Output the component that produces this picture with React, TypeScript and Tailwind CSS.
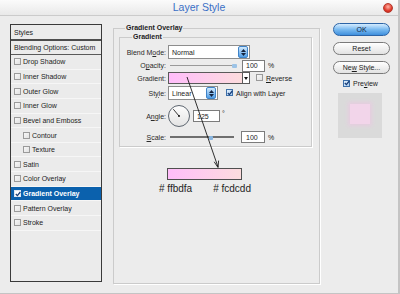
import React from "react";

const Box = ({ checked = false, light = false }: { checked?: boolean; light?: boolean }) => (
  <span
    className={`relative inline-flex h-[7px] w-[7px] shrink-0 items-center justify-center border ${
      light
        ? "border-[#dfe8f2] bg-white"
        : checked
          ? "border-[#3d6fa8] bg-gradient-to-br from-[#e3f1fd] to-[#a9cdf0]"
          : "border-[#9a9a9a] bg-gradient-to-br from-[#f7f7f7] to-[#e2e2e2]"
    }`}
  >
    {checked && (
      <svg width="6" height="6" viewBox="0 0 6 6" className="absolute">
        <path d="M0.8 3 L2.4 4.6 L5.3 1" fill="none" stroke={light ? "#1b3f73" : "#173c78"} strokeWidth="1.3" />
      </svg>
    )}
  </span>
);

const Spinner = () => (
  <span className="ml-auto flex h-[12px] w-[10px] flex-col items-center justify-center gap-[1px] rounded-[2px] border border-[#3f83c8] bg-gradient-to-b from-[#cfe9fd] to-[#4f9ee6]">
    <svg width="5" height="3" viewBox="0 0 5 3">
      <path d="M0 3 L2.5 0 L5 3 Z" fill="#13233f" />
    </svg>
    <svg width="5" height="3" viewBox="0 0 5 3">
      <path d="M0 0 L2.5 3 L5 0 Z" fill="#13233f" />
    </svg>
  </span>
);

const styles: { label: string; indent?: boolean; active?: boolean }[] = [
  { label: "Drop Shadow" },
  { label: "Inner Shadow" },
  { label: "Outer Glow" },
  { label: "Inner Glow" },
  { label: "Bevel and Emboss" },
  { label: "Contour", indent: true },
  { label: "Texture", indent: true },
  { label: "Satin" },
  { label: "Color Overlay" },
  { label: "Gradient Overlay", active: true },
  { label: "Pattern Overlay" },
  { label: "Stroke" },
];

const Label = ({ children }: { children: React.ReactNode }) => (
  <span className="w-[46px] shrink-0 text-right text-[#2a2a2a]">{children}</span>
);

export default function App() {
  return (
    <div className="relative h-[294px] w-[400px] overflow-hidden border-b border-r-2 border-[#c4c4c4] bg-[#ececec] font-['Liberation_Sans',Arial,sans-serif] text-[7px] leading-none text-[#1c1c1c]">
      {/* title bar */}
      <div className="relative flex h-[16px] items-center justify-center border-b border-[#cbcbcb] bg-gradient-to-b from-[#fbfbfb] to-[#e9e9e9]">
        <span className="text-[10.5px] text-[#3a6fc6]">Layer Style</span>
        <span className="absolute right-[5px] top-[3px] h-[10px] w-[10px] rounded-full border border-[#b33a2e] bg-[radial-gradient(circle_at_50%_35%,#ffb3a6,#e0392a_60%,#b8221a)]" />
      </div>

      <div className="flex pl-[10px] pt-[8px]">
        {/* styles list */}
        <div className="flex h-[258px] w-[92px] shrink-0 flex-col border border-[#3a3a3a] bg-[#ebebeb]">
          <div className="flex h-[16px] items-center border-b-2 border-[#4d4d4d] pl-[3px]">Styles</div>
          <div className="flex h-[14px] items-center border-b border-[#5a5a5a] pl-[3px]">Blending Options: Custom</div>
          {styles.map((s) => (
            <div
              key={s.label}
              className={`flex h-[14.65px] items-center gap-[2px] border-b border-[#f6f6f6] ${
                s.indent ? "pl-[12px]" : "pl-[3px]"
              } ${s.active ? "bg-[#0b61ad] font-bold text-white" : ""}`}
            >
              <Box checked={s.active} light={s.active} />
              <span>{s.label}</span>
            </div>
          ))}
        </div>

        {/* main settings */}
        <fieldset className="ml-[11px] h-[260px] w-[207px] shrink-0 border border-[#cbcbcb] shadow-[1px_1px_0_#fff]">
          <legend className="ml-[11px] px-[1px] text-[7px] font-bold leading-[8px]">Gradient Overlay</legend>

          <fieldset className="ml-[5px] mt-[1px] h-[114px] w-[193px] border border-[#cbcbcb] shadow-[1px_1px_0_#fff]">
            <legend className="ml-[12px] px-[1px] font-bold leading-[8px]">Gradient</legend>

            <div className="mt-[4px] flex h-[14px] items-center">
              <Label>
                Blend M<u>o</u>de:
              </Label>
              <div className="ml-[2px] flex h-[14px] w-[82px] items-center border border-[#8d8d8d] bg-white pl-[3px] pr-[1px]">
                Normal
                <Spinner />
              </div>
            </div>

            <div className="flex h-[13px] items-center">
              <Label>
                O<u>p</u>acity:
              </Label>
              <div className="relative ml-[2px] flex h-[13px] w-[72px] items-center">
                <span className="ml-[2px] h-[1px] w-[66px] bg-[#9a9a9a]" />
                <span className="absolute left-[64px] top-[5px] h-[4px] w-[5px] rounded-[1px] bg-[#9cc3e6]" />
              </div>
              <span className="ml-[2px] flex h-[12px] w-[23px] items-center border border-[#7c7c7c] bg-white pl-[3px]">100</span>
              <span className="ml-[3px]">%</span>
            </div>

            <div className="flex h-[12px] items-center">
              <Label>Gradient:</Label>
              <div className="ml-[2px] h-[12px] w-[75px] border border-[#5a5a5a] bg-gradient-to-r from-[#ffbdfa] to-[#fcdcdd]" />
              <div className="flex h-[12px] w-[7px] items-center justify-center border border-l-0 border-[#5a5a5a] bg-white">
                <svg width="4" height="3" viewBox="0 0 4 3">
                  <path d="M0 0 L4 0 L2 3 Z" fill="#111" />
                </svg>
              </div>
              <span className="ml-[6px]">
                <Box />
              </span>
              <span className="ml-[3px]">
                <u>R</u>everse
              </span>
            </div>

            <div className="mt-[2px] flex h-[14px] items-center">
              <Label>
                St<u>y</u>le:
              </Label>
              <div className="ml-[2px] flex h-[14px] w-[50px] items-center border border-[#8d8d8d] bg-white pl-[3px] pr-[1px]">
                Linear
                <Spinner />
              </div>
              <span className="ml-[8px]">
                <Box checked />
              </span>
              <span className="ml-[3px]">Align with Layer</span>
            </div>

            <div className="mt-[5px] flex h-[22px] items-center">
              <Label>
                A<u>n</u>gle:
              </Label>
              <div className="ml-[2px] h-[22px] w-[22px] rounded-full border border-[#5d6670] bg-gradient-to-b from-[#fdfdfd] to-[#e4e4e4]">
                <svg width="20" height="20" viewBox="0 0 20 20">
                  <line x1="10" y1="10" x2="4.3" y2="3.2" stroke="#222" strokeWidth="0.9" />
                  <circle cx="10" cy="10" r="1" fill="#111" />
                </svg>
              </div>
              <span className="ml-[3px] flex h-[12px] w-[27px] items-center border border-[#7c7c7c] bg-white pl-[3px]">125</span>
              <span className="ml-[2px] self-start pt-[5px]">°</span>
            </div>

            <div className="mt-[4px] flex h-[12px] items-center">
              <Label>
                <u>S</u>cale:
              </Label>
              <div className="relative ml-[2px] flex h-[12px] w-[72px] items-center">
                <span className="ml-[2px] h-[2px] w-[64px] bg-[#6f6f6f]" />
                <span className="absolute left-[41px] top-[5px] h-[4px] w-[4px] rounded-[1px] bg-[#8ab6e0]" />
              </div>
              <span className="ml-[1px] flex h-[12px] w-[24px] items-center border border-[#7c7c7c] bg-white pl-[4px]">100</span>
              <span className="ml-[3px]">%</span>
            </div>
          </fieldset>

          <div className="ml-[53px] mt-[21px] h-[12px] w-[75px] border border-[#4f4f4f] bg-gradient-to-r from-[#ffbdfa] to-[#fcdcdd]" />
          <div className="ml-[45px] mt-[3px] flex text-[10px] leading-[12px] text-[#1e1e1e]">
            <span># ffbdfa</span>
            <span className="ml-[21px]"># fcdcdd</span>
          </div>
        </fieldset>

        {/* buttons */}
        <div className="ml-[13px] flex w-[57px] shrink-0 flex-col">
          <div className="-mt-[1px] flex h-[13px] items-center justify-center rounded-full border border-[#2c64a6] bg-gradient-to-b from-[#d4ecff] via-[#79baf0] to-[#3e8fdd] text-[#10243f]">
            OK
          </div>
          <div className="mt-[6px] flex h-[13px] items-center justify-center rounded-full border border-[#7a7a7a] bg-gradient-to-b from-white to-[#e2e2e2]">
            Reset
          </div>
          <div className="mt-[6px] flex h-[13px] items-center justify-center rounded-full border border-[#7a7a7a] bg-gradient-to-b from-white to-[#e2e2e2]">
            <span>
              Ne<u>w</u> Style...
            </span>
          </div>
          <div className="ml-[10px] mt-[5px] flex h-[8px] items-center gap-[3px]">
            <Box checked />
            <span>
              Pre<u>v</u>iew
            </span>
          </div>
          <div className="ml-[5px] mt-[6px] flex h-[45px] w-[44px] items-start bg-[#dadada] pl-[12px] pt-[11px]">
            <div className="h-[20px] w-[20px] bg-[#f2d5ea] shadow-[0_0_4px_2px_#e6cde0]" />
          </div>
        </div>
      </div>

      {/* arrow from gradient field to gradient bar */}
      <svg className="pointer-events-none absolute left-0 top-0" width="400" height="294" viewBox="0 0 400 294">
        <line x1="187" y1="77" x2="218" y2="167" stroke="#1a1a1a" strokeWidth="0.9" />
        <path d="M214.2 161.8 L218 167.5 L218.6 160.6" fill="none" stroke="#1a1a1a" strokeWidth="0.9" />
      </svg>
    </div>
  );
}
